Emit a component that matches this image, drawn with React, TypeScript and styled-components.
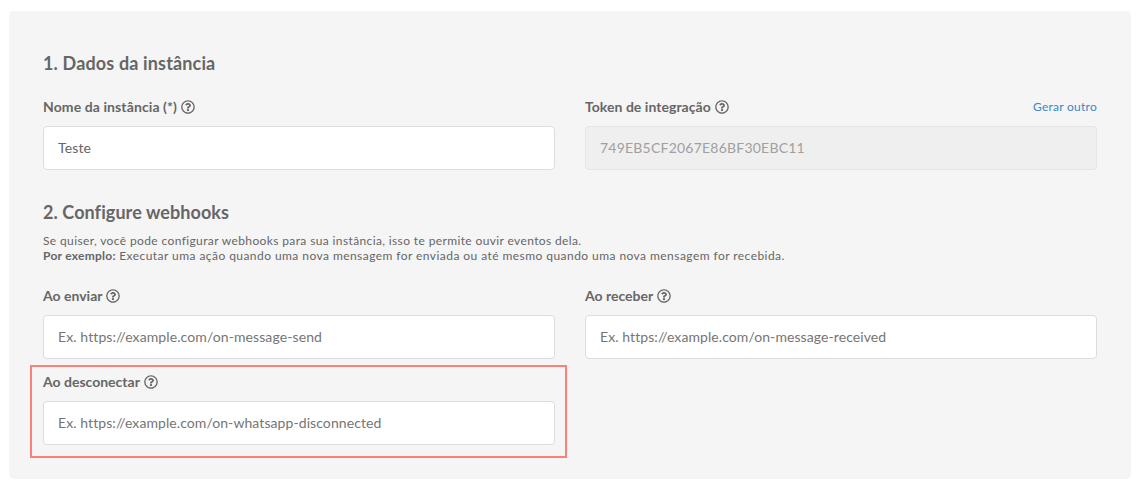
import React from "react";
import styled, { createGlobalStyle } from "styled-components";
import { FaRegQuestionCircle } from "react-icons/fa";

const GlobalStyle = createGlobalStyle`
  *, *::before, *::after { box-sizing: border-box; }
  body {
    margin: 0;
    background: #fff;
    color: #666;
    font-family: Lato, "Open Sans", sans-serif;
    font-size: 14px;
  }
`;

const Page = styled.main`
  padding: 11px 12px 8px 9px;
`;

const Panel = styled.form`
  height: 468px;
  padding: 41px 34px 0;
  border-radius: 5px;
  background: #f5f5f5;
`;

const Title = styled.h2<{ $top?: number; $tracking: number }>`
  margin: ${(p) => p.$top ?? 0}px 0 0;
  font-size: 18px;
  line-height: 22px;
  font-weight: 700;
  white-space: nowrap;
  letter-spacing: ${(p) => p.$tracking}px;
`;

const Grid = styled.div<{ $top: number }>`
  display: grid;
  grid-template-columns: 1fr 1fr;
  gap: 15px 30px;
  margin-top: ${(p) => p.$top}px;
`;

const FieldBox = styled.div<{ $highlight?: boolean }>`
  position: relative;
  display: flex;
  flex-direction: column;
  gap: 11px;

  &::after {
    content: "";
    display: ${(p) => (p.$highlight ? "block" : "none")};
    position: absolute;
    inset: -9px -12px -13px -13px;
    border: 2px solid #fb8079;
    pointer-events: none;
  }
`;

const FieldHead = styled.div`
  display: flex;
  align-items: center;
  justify-content: space-between;
  height: 16px;
`;

const Label = styled.label<{ $tracking: number }>`
  display: flex;
  align-items: center;
  gap: 4px;
  font-weight: 700;
  line-height: 16px;
  white-space: nowrap;

  span { letter-spacing: ${(p) => p.$tracking}px; }
`;

const Action = styled.a`
  color: #3b86c4;
  font-size: 12px;
  line-height: 16px;
  letter-spacing: 0.25px;
  text-decoration: none;
`;

const Input = styled.input<{ $tracking: number }>`
  width: 100%;
  height: 44px;
  padding: 0 14px 2px;
  border: 1px solid #ddd;
  border-radius: 4px;
  outline: 0;
  background: #fff;
  color: #666;
  font-family: inherit;
  font-size: 14px;
  letter-spacing: ${(p) => p.$tracking}px;

  &::placeholder { color: #757575; opacity: 1; }
  &:disabled { background: #efefef; border-color: #e5e5e5; color: #a0a0a0; }
`;

const Description = styled.div`
  margin-top: 10px;
  font-size: 12px;
  line-height: 15px;
  white-space: nowrap;
`;

const Line = styled.p<{ $tracking: number }>`
  margin: 0;
  letter-spacing: ${(p) => p.$tracking}px;
`;

const Strong = styled.strong`
  letter-spacing: 0.25px;
`;

type FieldProps = {
  label: string;
  labelTracking?: number;
  textTracking?: number;
  value?: string;
  placeholder?: string;
  disabled?: boolean;
  highlight?: boolean;
  action?: React.ReactNode;
};

function Field({ label, labelTracking = 0, textTracking = 0.08, value, placeholder, disabled, highlight, action }: FieldProps) {
  return (
    <FieldBox $highlight={highlight}>
      <FieldHead>
        <Label $tracking={labelTracking}>
          <span>{label}</span>
          <FaRegQuestionCircle size={14} />
        </Label>
        {action}
      </FieldHead>
      <Input $tracking={textTracking} defaultValue={value} placeholder={placeholder} disabled={disabled} />
    </FieldBox>
  );
}

export default function App() {
  return (
    <Page>
      <GlobalStyle />
      <Panel>
        <Title $tracking={0.15}>1. Dados da instância</Title>
        <Grid $top={25}>
          <Field label="Nome da instância (*)" labelTracking={0.1} value="Teste" textTracking={0.15} />
          <Field
            label="Token de integração"
            labelTracking={0.04}
            value="749EB5CF2067E86BF30EBC11"
            textTracking={0.22}
            disabled
            action={<Action>Gerar outro</Action>}
          />
        </Grid>
        <Title $top={31} $tracking={0.08}>2. Configure webhooks</Title>
        <Description>
          <Line $tracking={0.375}>
            Se quiser, você pode configurar webhooks para sua instância, isso te permite ouvir eventos dela.
          </Line>
          <Line $tracking={0.44}>
            <Strong>Por exemplo:</Strong> Executar uma ação quando uma nova mensagem for enviada ou até mesmo quando uma nova mensagem for recebida.
          </Line>
        </Description>
        <Grid $top={25}>
          <Field label="Ao enviar" placeholder="Ex. https://example.com/on-message-send" textTracking={0.1} />
          <Field label="Ao receber" placeholder="Ex. https://example.com/on-message-received" />
          <Field label="Ao desconectar" placeholder="Ex. https://example.com/on-whatsapp-disconnected" highlight />
        </Grid>
      </Panel>
    </Page>
  );
}
